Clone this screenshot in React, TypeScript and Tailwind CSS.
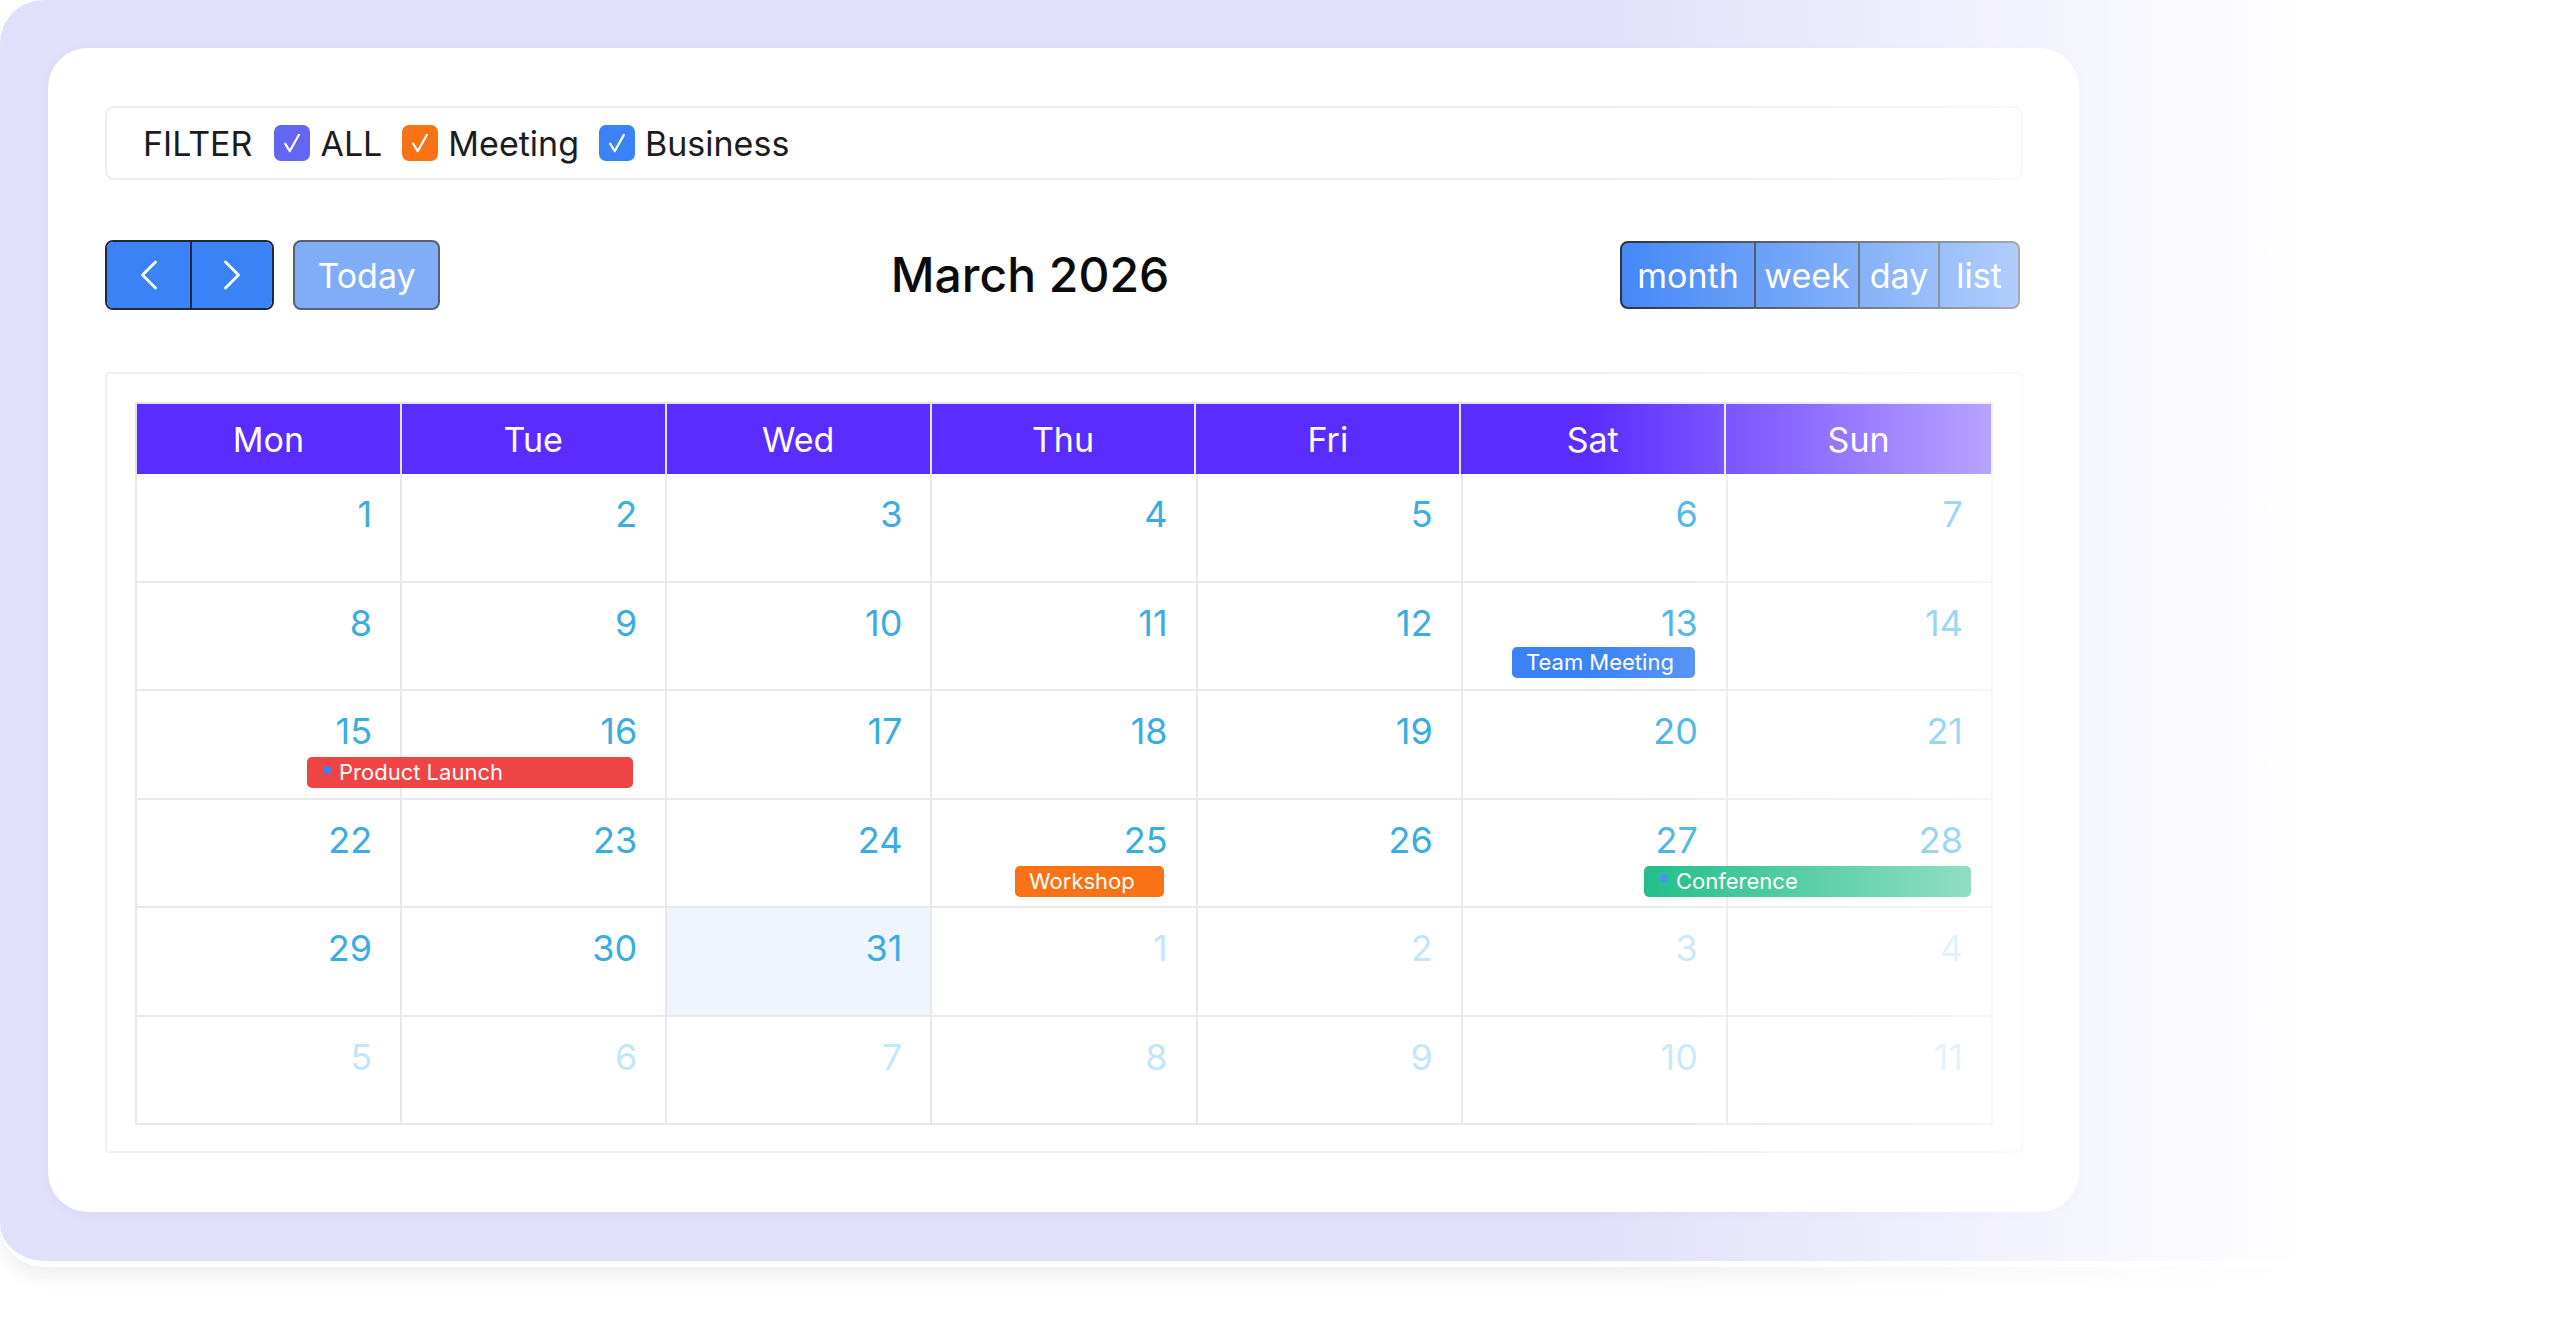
import React from 'react';
import { ChevronLeft, ChevronRight } from 'lucide-react';

type Cell = { day: number; muted?: boolean; today?: boolean };
type Ev = { title: string; left: number; width: number; top: number; color: string; dot?: boolean };

const weeks: Cell[][] = [
  [1, 2, 3, 4, 5, 6, 7].map((d) => ({ day: d })),
  [8, 9, 10, 11, 12, 13, 14].map((d) => ({ day: d })),
  [15, 16, 17, 18, 19, 20, 21].map((d) => ({ day: d })),
  [22, 23, 24, 25, 26, 27, 28].map((d) => ({ day: d })),
  [
    { day: 29 },
    { day: 30 },
    { day: 31, today: true },
    { day: 1, muted: true },
    { day: 2, muted: true },
    { day: 3, muted: true },
    { day: 4, muted: true },
  ],
  [5, 6, 7, 8, 9, 10, 11].map((d) => ({ day: d, muted: true })),
];

// positions are px from the left edge of the week row
const events: Record<number, Ev[]> = {
  1: [{ title: 'Team Meeting', left: 1375, width: 183, top: 64, color: 'bg-[#3b82f6]' }],
  2: [{ title: 'Product Launch', left: 170, width: 326, top: 66, color: 'bg-[#ef4444]', dot: true }],
  3: [
    { title: 'Workshop', left: 878, width: 149, top: 66, color: 'bg-[#f97316]' },
    { title: 'Conference', left: 1507, width: 327, top: 66, color: 'bg-[#10b981]', dot: true },
  ],
};

const days = ['Mon', 'Tue', 'Wed', 'Thu', 'Fri', 'Sat', 'Sun'];

const CheckBox = ({ color }: { color: string }) => (
  <span className={`flex h-[36px] w-[36px] items-center justify-center rounded-[7px] ${color}`}>
    <svg width="30" height="30" viewBox="0 0 24 24" fill="none" stroke="white" strokeWidth="1.7" strokeLinecap="round" strokeLinejoin="round">
      <path d="M6.5 12.5 10.2 18.5 17.5 5.5" />
    </svg>
  </span>
);

export default function App() {
  return (
    <div className="relative h-[1317px] w-[2560px] overflow-hidden bg-white font-['Inter',sans-serif]">
      <div className="h-[1267px] w-[2560px] rounded-[44px] border-b-[6px] border-white bg-[#e1e0fb] pl-[48px] pt-[48px] shadow-[0_10px_18px_rgba(30,30,60,0.07)]">
        <div className="flex h-[1164px] w-[2031px] flex-col rounded-[40px] bg-white pl-[57px] pr-[56px] pt-[58px] shadow-[0_2px_10px_rgba(80,80,160,0.05)]">
          {/* Filter bar */}
          <div className="flex h-[74px] items-center rounded-[9px] border-2 border-[#ececf1] pl-[36px] text-[34px] text-[#1c1c1e]">
            <span>FILTER</span>
            <span className="ml-[22px]"><CheckBox color="bg-[#6366f1]" /></span>
            <span className="ml-[10px]">ALL</span>
            <span className="ml-[20px]"><CheckBox color="bg-[#f97316]" /></span>
            <span className="ml-[10px]">Meeting</span>
            <span className="ml-[20px]"><CheckBox color="bg-[#3b82f6]" /></span>
            <span className="ml-[10px]">Business</span>
          </div>

          {/* Toolbar */}
          <div className="mt-[60px] flex h-[70px] items-center justify-between">
            <div className="flex gap-[19px]">
              <div className="flex h-[70px] overflow-hidden rounded-[8px] border-2 border-[#1e293b]">
                <button className="flex w-[83px] items-center justify-center bg-[#3b82f6] text-white">
                  <ChevronLeft size={52} strokeWidth={1.3} />
                </button>
                <button className="flex w-[82px] items-center justify-center border-l-2 border-[#1e293b] bg-[#3b82f6] text-white">
                  <ChevronRight size={52} strokeWidth={1.3} />
                </button>
              </div>
              <button className="h-[70px] w-[147px] rounded-[8px] border-2 border-[#56606e] bg-[#80adf8] text-[34px] text-white">
                Today
              </button>
            </div>
            <h1 className="text-[48px] font-medium text-[#0b0b0b]">March 2026</h1>
            <div className="mr-[3px] flex h-[68px] overflow-hidden rounded-[8px] border-2 border-[#1e293b] bg-[#3b82f6] text-[34px] text-white">
              <button className="w-[132px]">month</button>
              <button className="w-[104px] border-l-2 border-[#1f2937]">week</button>
              <button className="w-[80px] border-l-2 border-[#1f2937]">day</button>
              <button className="w-[80px] border-l-2 border-[#1f2937]">list</button>
            </div>
          </div>

          {/* Calendar */}
          <div className="mt-[62px] h-[781px] rounded-[4px] border-2 border-[#f0f0f3] p-[28px]">
            <div className="grid h-[72px] grid-cols-7 border-2 border-b-0 border-[#e4e1f3] bg-[#5b2cff] text-[34px] text-white">
              {days.map((d, i) => (
                <div key={d} className={`flex items-center justify-center ${i < 6 ? 'border-r-2 border-[#e6e6ef]' : ''}`}>
                  {d}
                </div>
              ))}
            </div>
            <div className="border-l-2 border-[#e7e8ec]">
              {weeks.map((week, wi) => (
                <div key={wi} className="relative grid h-[108.5px] grid-cols-7">
                  {week.map((c, ci) => (
                    <div
                      key={ci}
                      className={`border-b-2 border-r-2 border-[#e7e8ec] pr-[28px] pt-[22px] text-right text-[36px] leading-none ${
                        c.today ? 'bg-[#eef5ff]' : ''
                      } ${c.muted ? 'text-[#c2e5f7]' : 'text-[#39ade2]'}`}
                    >
                      {c.day}
                    </div>
                  ))}
                  {(events[wi] || []).map((e) => (
                    <div
                      key={e.title}
                      className={`absolute flex h-[31px] items-center rounded-[5px] text-[22px] text-white ${e.color} ${
                        e.dot ? 'pl-[16px]' : 'pl-[14px]'
                      }`}
                      style={{ left: e.left, width: e.width, top: e.top }}
                    >
                      {e.dot && <span className="mb-[6px] mr-[8px] h-[8px] w-[8px] rounded-full bg-[#3b82f6]" />}
                      {e.title}
                    </div>
                  ))}
                </div>
              ))}
            </div>
          </div>
        </div>
      </div>
      {/* right side fade */}
      <div className="pointer-events-none absolute inset-0 bg-[linear-gradient(to_right,rgba(255,255,255,0)_62%,#ffffff_90%)]" />
    </div>
  );
}
